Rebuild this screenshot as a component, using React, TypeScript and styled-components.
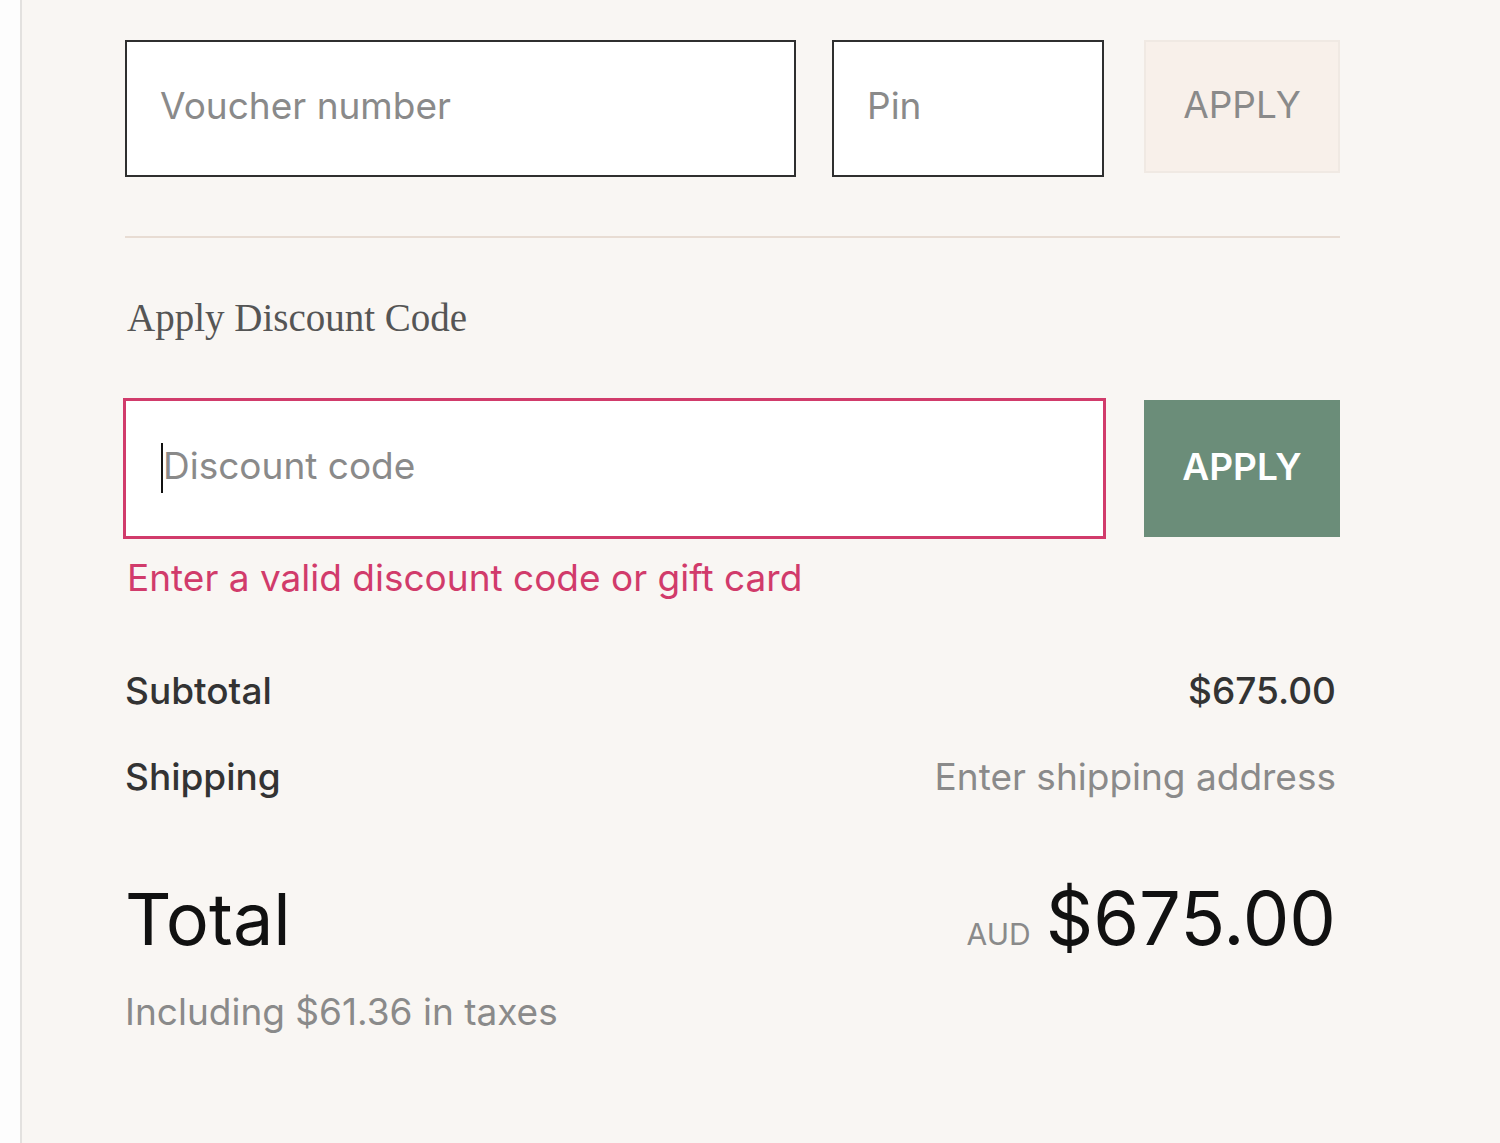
import React from 'react';
import styled, { createGlobalStyle } from 'styled-components';

const GlobalStyle = createGlobalStyle`
  html, body {
    margin: 0;
    padding: 0;
    background: #fdfdfd;
  }

  body {
    font-family: Inter, "Liberation Sans", Arial, sans-serif;
  }
`;

const Page = styled.div`
  display: flex;
  min-height: 100vh;
`;

const Panel = styled.div`
  flex: 1;
  margin-left: 20px;
  border-left: 2px solid #e3e1df;
  background: #f9f6f3;
  padding: 40px 0 0 103px;
`;

const Content = styled.div`
  width: 1215px;
  display: flex;
  flex-direction: column;
`;

const FieldRow = styled.div<{ $gap: number }>`
  display: flex;
  align-items: center;
  gap: ${props => props.$gap}px;
`;

const TextField = styled.input<{ $width: number }>`
  box-sizing: border-box;
  width: ${props => props.$width}px;
  height: 137px;
  border: 2px solid #2f2f2f;
  background: #fff;
  padding: 0 0 7px 33px;
  font-family: inherit;
  font-size: 37px;
  color: #333;
  outline: none;

  &::placeholder {
    color: #8a8a8a;
  }
`;

const ErrorFieldWrap = styled.div`
  position: relative;
  margin-left: -2px;

  &::before {
    content: '';
    position: absolute;
    left: 38px;
    top: 45px;
    width: 2px;
    height: 50px;
    background: #111;
  }
`;

const ErrorField = styled(TextField)`
  height: 141px;
  border: 3px solid #d13b6b;
  padding-left: 37px;
`;

const ApplyButton = styled.button<{ $active?: boolean }>`
  box-sizing: border-box;
  width: 196px;
  height: ${props => (props.$active ? 137 : 133)}px;
  border: 2px solid ${props => (props.$active ? '#6b8d79' : '#f0e9e3')};
  background: ${props => (props.$active ? '#6b8d79' : '#f8f0ea')};
  color: ${props => (props.$active ? '#fff' : '#8a8a8a')};
  font-family: inherit;
  font-size: 37px;
  font-weight: ${props => (props.$active ? 600 : 400)};
  padding: 0 0 4px;
  align-self: ${props => (props.$active ? 'center' : 'flex-start')};
`;

const Divider = styled.hr`
  margin: 59px 0 0;
  border: none;
  height: 2px;
  background: #e8dcd3;
`;

const Heading = styled.h2`
  margin: 58px 0 58px 2px;
  font-family: "Liberation Serif", "Times New Roman", serif;
  font-weight: 400;
  font-size: 39px;
  line-height: 44px;
  color: #555;
`;

const ErrorText = styled.div`
  margin: 17px 0 0 2px;
  font-size: 37px;
  line-height: 44px;
  color: #d13b6b;
`;

const SummaryRow = styled.div<{ $top: number }>`
  display: flex;
  justify-content: space-between;
  align-items: baseline;
  margin-top: ${props => props.$top}px;
  padding-right: 4px;
  font-size: 37px;
  line-height: 44px;
`;

const Label = styled.span`
  color: #333;
  font-weight: 500;
`;

const Value = styled.span<{ $muted?: boolean }>`
  color: ${props => (props.$muted ? '#8a8a8a' : '#333')};
  font-weight: ${props => (props.$muted ? 400 : 500)};
`;

const TotalRow = styled.div`
  display: flex;
  justify-content: space-between;
  align-items: baseline;
  margin-top: 79px;
  padding-right: 4px;
  line-height: 80px;
  color: #111;
`;

const TotalLabel = styled.span`
  font-size: 72px;
`;

const TotalAmount = styled.span`
  display: flex;
  align-items: baseline;
  gap: 15px;
  font-size: 74px;
`;

const Currency = styled.span`
  font-size: 30px;
  color: #8a8a8a;
`;

const TaxNote = styled.div`
  margin-top: 16px;
  font-size: 37px;
  line-height: 44px;
  color: #8a8a8a;
`;

const App: React.FC = () => {
  return (
    <Page>
      <GlobalStyle />
      <Panel>
        <Content>
          <FieldRow $gap={36}>
            <TextField $width={672} placeholder="Voucher number" />
            <FieldRow $gap={40}>
              <TextField $width={272} placeholder="Pin" />
              <ApplyButton>APPLY</ApplyButton>
            </FieldRow>
          </FieldRow>

          <Divider />

          <Heading>Apply Discount Code</Heading>

          <FieldRow $gap={38}>
            <ErrorFieldWrap>
              <ErrorField $width={983} placeholder="Discount code" />
            </ErrorFieldWrap>
            <ApplyButton $active>APPLY</ApplyButton>
          </FieldRow>
          <ErrorText>Enter a valid discount code or gift card</ErrorText>

          <SummaryRow $top={69}>
            <Label>Subtotal</Label>
            <Value>$675.00</Value>
          </SummaryRow>
          <SummaryRow $top={42}>
            <Label>Shipping</Label>
            <Value $muted>Enter shipping address</Value>
          </SummaryRow>

          <TotalRow>
            <TotalLabel>Total</TotalLabel>
            <TotalAmount>
              <Currency>AUD</Currency>
              $675.00
            </TotalAmount>
          </TotalRow>
          <TaxNote>Including $61.36 in taxes</TaxNote>
        </Content>
      </Panel>
    </Page>
  );
};

export default App;
